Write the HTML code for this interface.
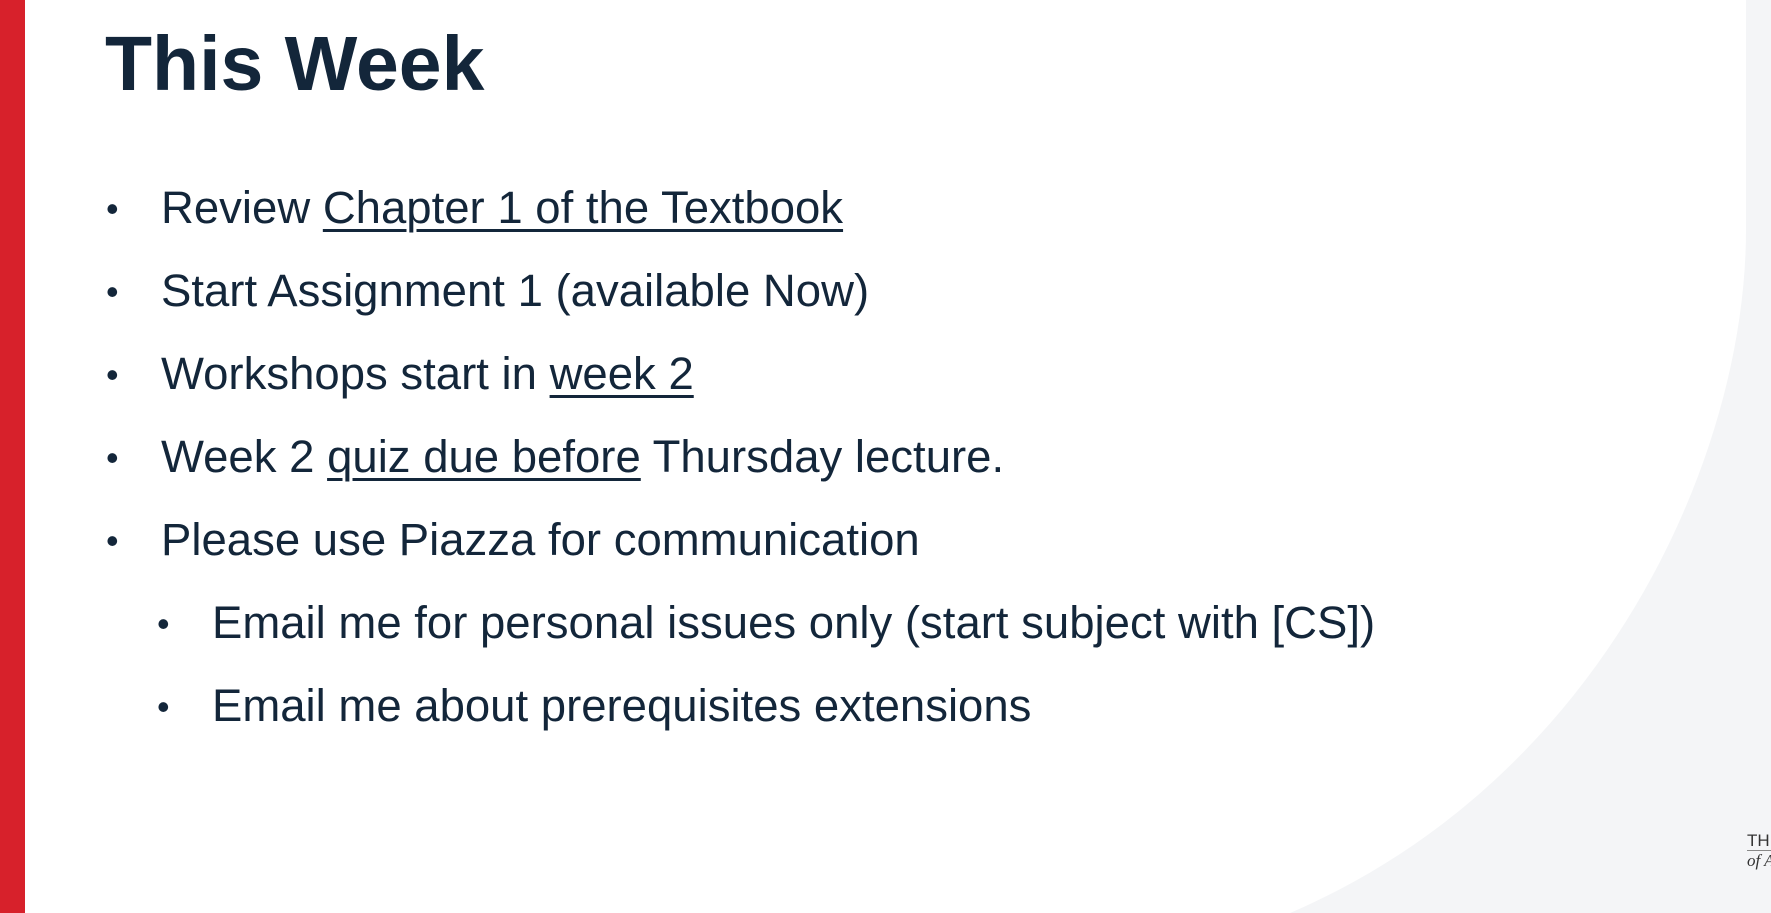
<!DOCTYPE html>
<html><head><meta charset="utf-8"><style>
html,body{margin:0;padding:0}
body{width:1771px;height:913px;position:relative;overflow:hidden;background:#f4f5f7;font-family:"Liberation Sans",Arial,sans-serif;color:#13263a}
svg.bg{position:absolute;left:0;top:0}
.bar{position:absolute;left:0;top:0;width:25px;height:913px;background:#d7212b}
h1{position:absolute;left:105px;top:18px;margin:0;font-size:77px;font-weight:bold;line-height:92px;letter-spacing:0}
.l{position:absolute;font-size:45.5px;line-height:50px;white-space:nowrap}
.l .b{position:absolute;left:-55px;font-size:36px;top:1px}
.l u{text-decoration-thickness:3px;text-underline-offset:6px}
.logo{position:absolute;left:1747px;top:831px;font-size:17px;line-height:19px;color:#333}
</style></head><body>
<svg class="bg" width="1771" height="913"><path d="M0,0 L1746,0 L1746,230 C1746,460 1600,780 1290,913 L0,913 Z" fill="#fff"/></svg>
<div class="bar"></div>
<h1>This Week</h1>
<div class="l" style="left:161px;top:183px"><span class="b">•</span>Review <u>Chapter 1 of the Textbook</u></div>
<div class="l" style="left:161px;top:266px"><span class="b">•</span>Start Assignment 1 (available Now)</div>
<div class="l" style="left:161px;top:349px"><span class="b">•</span>Workshops start in <u>week 2</u></div>
<div class="l" style="left:161px;top:432px"><span class="b">•</span>Week 2 <u>quiz due before</u> Thursday lecture.</div>
<div class="l" style="left:161px;top:515px"><span class="b">•</span>Please use Piazza for communication</div>
<div class="l" style="left:212px;top:598px"><span class="b">•</span>Email me for personal issues only (start subject with [CS])</div>
<div class="l" style="left:212px;top:681px"><span class="b">•</span>Email me about prerequisites extensions</div>
<div class="logo"><div style="border-bottom:1px solid #888">THE</div><div style="font-style:italic;font-family:'Liberation Serif',serif">of A</div></div>
</body></html>
